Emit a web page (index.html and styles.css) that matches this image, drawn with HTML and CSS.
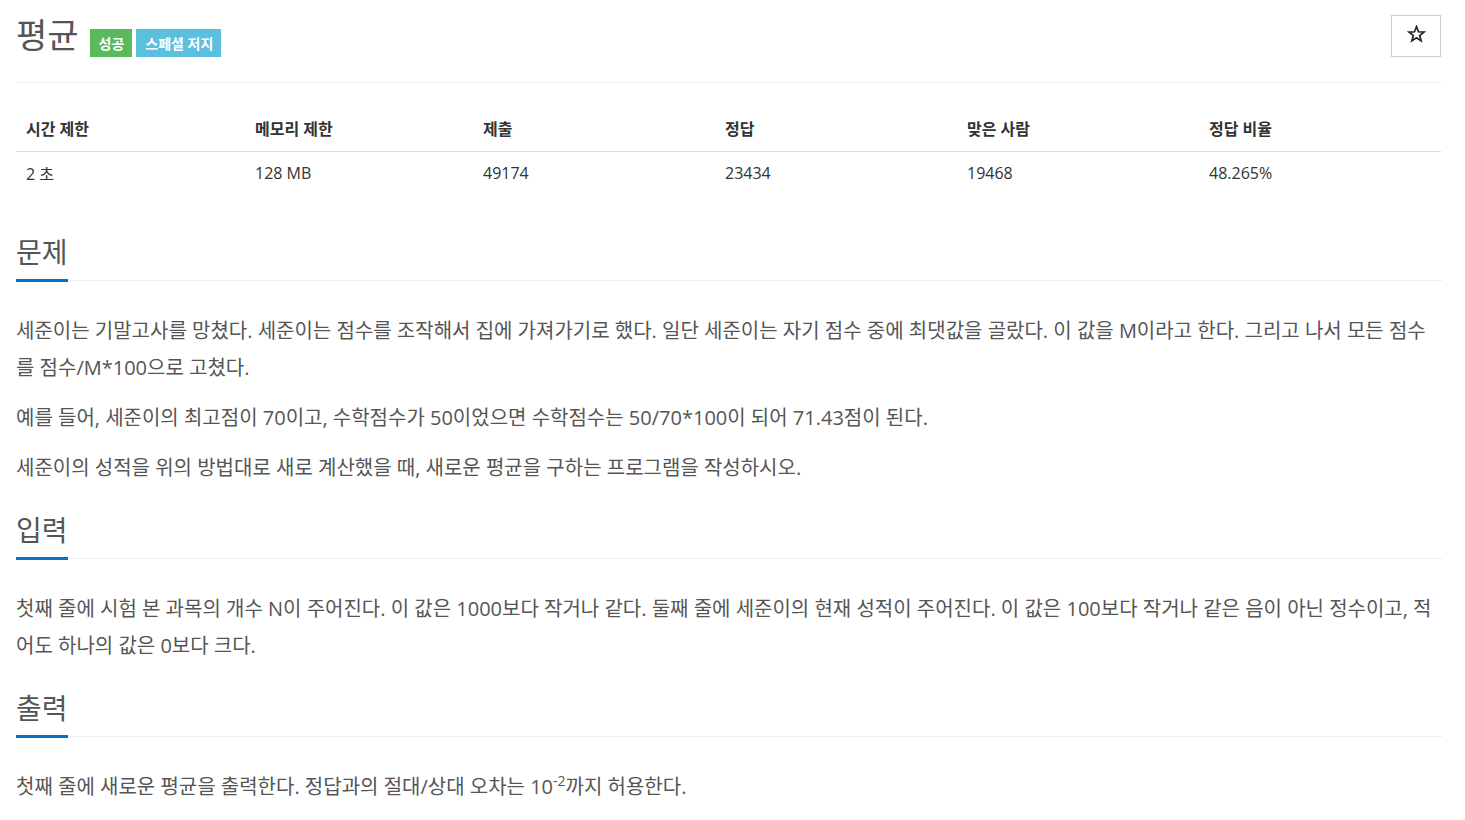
FILE: index.html
```html
<!DOCTYPE html>
<html lang="ko">
<head>
<meta charset="utf-8">
<title>평균</title>
<link rel="stylesheet" href="styles.css">
</head>
<body>
<div class="page">
  <div class="page-header">
    <h1 class="title">평균</h1>
    <span class="label label-success">성공</span>
    <span class="label label-info">스페셜 저지</span>
    <button class="star-btn" type="button" aria-label="즐겨찾기">
      <svg class="star-icon" viewBox="0 0 24 24" width="19" height="19" aria-hidden="true">
        <polygon points="12,2 14.47,8.6 21.51,8.91 15.99,13.3 17.88,20.09 12,16.2 6.12,20.09 8.01,13.3 2.49,8.91 9.53,8.6" fill="none" stroke="#222" stroke-width="2.1" stroke-linejoin="miter"/>
      </svg>
    </button>
  </div>

  <table class="info-table">
    <thead>
      <tr>
        <th class="c1">시간 제한</th>
        <th class="c2">메모리 제한</th>
        <th class="c3">제출</th>
        <th class="c4">정답</th>
        <th class="c5">맞은 사람</th>
        <th class="c6">정답 비율</th>
      </tr>
    </thead>
    <tbody>
      <tr>
        <td>2 초</td>
        <td>128 MB</td>
        <td>49174</td>
        <td>23434</td>
        <td>19468</td>
        <td>48.265%</td>
      </tr>
    </tbody>
  </table>

  <section class="section section-first">
    <div class="headline"><h2>문제</h2></div>
    <div class="problem-text">
      <p>세준이는 기말고사를 망쳤다. 세준이는 점수를 조작해서 집에 가져가기로 했다. 일단 세준이는 자기 점수 중에 최댓값을 골랐다. 이 값을 M이라고 한다. 그리고 나서 모든 점수를 점수/M*100으로 고쳤다.</p>
      <p>예를 들어, 세준이의 최고점이 70이고, 수학점수가 50이었으면 수학점수는 50/70*100이 되어 71.43점이 된다.</p>
      <p>세준이의 성적을 위의 방법대로 새로 계산했을 때, 새로운 평균을 구하는 프로그램을 작성하시오.</p>
    </div>
  </section>

  <section class="section">
    <div class="headline"><h2>입력</h2></div>
    <div class="problem-text">
      <p>첫째 줄에 시험 본 과목의 개수 N이 주어진다. 이 값은 1000보다 작거나 같다. 둘째 줄에 세준이의 현재 성적이 주어진다. 이 값은 100보다 작거나 같은 음이 아닌 정수이고, 적어도 하나의 값은 0보다 크다.</p>
    </div>
  </section>

  <section class="section">
    <div class="headline"><h2>출력</h2></div>
    <div class="problem-text">
      <p>첫째 줄에 새로운 평균을 출력한다. 정답과의 절대/상대 오차는 10<sup>-2</sup>까지 허용한다.</p>
    </div>
  </section>
</div>
</body>
</html>
```

FILE: styles.css
```css
* { box-sizing: border-box; }

html, body {
  margin: 0;
  padding: 0;
  background: #fff;
}

body {
  font-family: "Open Sans", "Noto Sans CJK KR", sans-serif;
  color: #333;
}

.page {
  padding: 0 24px 0 16px;
}

.page-header {
  display: flex;
  align-items: center;
  height: 83px;
  padding-bottom: 2px;
  border-bottom: 1px solid #eee;
}

.title {
  margin: 0 11px 0 0;
  font-size: 34px;
  font-weight: 400;
  color: #555;
  line-height: 40px;
  position: relative;
  top: -5px;
}

.label {
  display: inline-flex;
  align-items: center;
  height: 28px;
  padding: 0 8px 0 9px;
  margin-right: 4px;
  font-size: 14px;
  font-weight: 700;
  color: #fff;
  position: relative;
  top: 3px;
}

.label-success { background: #5cb85c; }
.label-info { background: #5bc0de; }

.star-btn {
  margin-left: auto;
  width: 50px;
  height: 42px;
  border: 1px solid #ccc;
  background: #fff;
  position: relative;
  top: -4px;
  padding: 0 0 3px 0;
  display: flex;
  align-items: center;
  justify-content: center;
}

.star-icon { display: block; }

.info-table {
  width: 100%;
  border-collapse: collapse;
  margin-top: 28px;
  font-size: 16px;
}

.info-table th,
.info-table td {
  text-align: left;
  padding: 0 10px;
  height: 40px;
  vertical-align: middle;
}

.info-table th {
  font-weight: 700;
  color: #333;
  vertical-align: top;
  padding-top: 5px;
  border-bottom: 1px solid #ddd;
}

.info-table td {
  color: #333;
  padding-top: 4px;
}

.c1 { width: 229px; }
.c2 { width: 228px; }
.c3 { width: 242px; }
.c4 { width: 242px; }
.c5 { width: 242px; }
.c6 { width: 242px; }

.section {
  margin-top: 25px;
}

.section-first {
  margin-top: 42px;
}

.headline {
  border-bottom: 1px dotted #ddd;
  display: flex;
}

.headline h2 {
  margin: 0 0 -2px 0;
  font-size: 28px;
  font-weight: 400;
  color: #555;
  line-height: 38px;
  padding-bottom: 8px;
  border-bottom: 3px solid #0076c0;
}

.problem-text {
  margin-top: 31px;
  font-size: 20px;
  line-height: 37px;
  color: #555;
}

.problem-text p {
  margin: 0 0 13px 0;
}

.problem-text sup {
  font-size: 14px;
  line-height: 0;
  vertical-align: 8px;
}
```
